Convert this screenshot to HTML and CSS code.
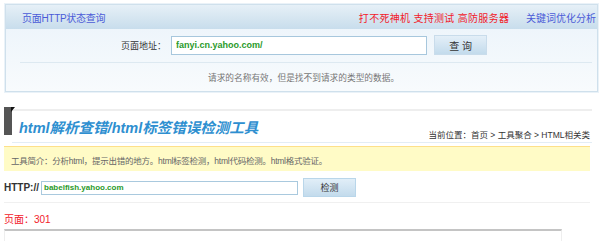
FILE: index.html
```html
<!DOCTYPE html>
<html>

<head>
  <title>html解析查错</title>
  <link rel="stylesheet" href="styles.css">
</head>

<body>

  <div class="status-box">
    <div class="status-head">
      <span class="status-title">页面HTTP状态查询</span>
      <span class="status-links">
        <span class="red-link">打不死神机 支持测试 高防服务器</span>
        <span class="blue-link">关键词优化分析</span>
      </span>
    </div>
    <div class="status-body">
      <div class="query-row">
        <span class="query-label">页面地址：</span>
        <input class="query-input" type="text" value="fanyi.cn.yahoo.com/">
        <button class="query-btn">查 询</button>
      </div>
      <div class="query-msg">请求的名称有效，但是找不到请求的类型的数据。</div>
    </div>
  </div>

  <div class="tool-head">
    <div class="tool-bar"></div>
    <div class="tool-main">
      <h1 class="tool-title">html解析查错/html标签错误检测工具</h1>
      <div class="crumb">当前位置：首页 &gt; 工具聚合 &gt; HTML相关类</div>
    </div>
  </div>

  <div class="intro">工具简介：分析html，提示出错的地方。html标签检测，html代码检测。html格式验证。</div>

  <div class="check-row">
    <span class="check-label">HTTP://</span>
    <input class="check-input" type="text" value="babelfish.yahoo.com">
    <button class="check-btn">检测</button>
  </div>

  <div class="result-code">页面：301</div>
  <div class="result-box"></div>

</body>

</html>
```

FILE: styles.css
```css
* {
  font-family: "Liberation Sans", "Noto Sans CJK SC", sans-serif;
  box-sizing: border-box;
}

body {
  margin: 0;
  background-color: #ffffff;
  width: 601px;
  height: 241px;
  overflow: hidden;
}

/* Top status box */
.status-box {
  margin: 4px 3px 0 5px;
  border: 1px solid #cfe0ec;
  box-shadow: 0 0 0 1px #eaf2f8;
  height: 88px;
}

.status-head {
  height: 24px;
  background: linear-gradient(#e6f0f7, #c8ddec);
  display: flex;
  justify-content: space-between;
  align-items: center;
  padding: 0 1px 0 16px;
  font-size: 10px;
}

.status-title {
  color: #4b5bd8;
  letter-spacing: -0.3px;
}

.red-link {
  color: #f2202a;
  margin-right: 14px;
  letter-spacing: 0.3px;
}

.blue-link {
  color: #4b5bd8;
}

.status-body {
  background: linear-gradient(#eef5fb, #f8fbfd);
  height: 62px;
  padding: 6px 0 0 14px;
}

.query-row {
  display: flex;
  align-items: center;
  padding-left: 101px;
  padding-bottom: 7px;
  border-bottom: 1px solid #dde9f1;
  width: 572px;
}

.query-label {
  font-size: 9px;
  color: #333;
  margin-right: 5px;
}

.query-input {
  width: 256px;
  height: 19px;
  border: 1px solid #a7c7dd;
  background: #fff;
  color: #2a9a2a;
  font-weight: bold;
  font-size: 9px;
  padding: 0 4px;
}

.query-btn {
  width: 53px;
  height: 20px;
  margin-left: 7px;
  border: 1px solid #c9dceb;
  background: linear-gradient(#e4eff8, #c3dbec);
  font-size: 10px;
  color: #333;
  padding: 0;
}

.query-msg {
  text-align: center;
  font-size: 8.7px;
  color: #777;
  margin-top: 8px;
  padding-right: 10px;
}

/* Tool heading */
.tool-head {
  display: flex;
  margin-top: 14px;
  height: 37px;
}

.tool-bar {
  width: 8px;
  height: 28px;
  margin-left: 4px;
  margin-top: 1px;
  background-color: #555;
  position: relative;
}

.tool-bar::after {
  content: "";
  position: absolute;
  right: -3px;
  top: 0;
  border-left: 4px solid #111;
  border-bottom: 5px solid transparent;
}

.tool-main {
  flex: 1;
  margin-right: 9px;
  border-top: 2px solid #eeeeee;
  border-bottom: 1px solid #e3edf5;
  margin-top: 3px;
  display: flex;
  justify-content: space-between;
  align-items: flex-end;
  padding: 0 2px 2px 7px;
}

.tool-title {
  margin: 0;
  font-size: 14.5px;
  font-style: italic;
  font-weight: bold;
  color: #2e8fd0;
  align-self: flex-start;
  margin-top: 5px;
}

.crumb {
  font-size: 8.5px;
  color: #333;
}

/* Intro */
.intro {
  margin: 3px 11px 0 4px;
  height: 25px;
  background-color: #fffbc6;
  border-top: 1px solid #fde08a;
  font-size: 8.5px;
  letter-spacing: -0.25px;
  color: #666;
  padding: 7px 0 0 7px;
}

/* Check row */
.check-row {
  display: flex;
  align-items: center;
  margin: 7px 11px 0 4px;
  padding-bottom: 5px;
  border-bottom: 1px solid #f0f0f0;
}

.check-label {
  font-size: 10px;
  font-weight: bold;
  color: #333;
  margin-right: 2px;
}

.check-input {
  width: 257px;
  height: 14px;
  border: 1px solid #a9c9de;
  color: #2a9a2a;
  font-weight: bold;
  font-size: 8px;
  padding: 0 2px;
}

.check-btn {
  width: 53px;
  height: 19px;
  margin-left: 5px;
  border: 1px solid #b9d6ea;
  background: linear-gradient(#e1eef8, #c3dbec);
  font-size: 9px;
  color: #333;
  padding: 0;
}

/* Result */
.result-code {
  color: #f2202a;
  font-size: 10px;
  margin: 8px 0 0 4px;
}

.result-box {
  margin: 3px 39px 0 4px;
  height: 20px;
  border-top: 2px solid #c4c4c4;
  border-left: 1px solid #eee;
  border-right: 1px solid #eee;
}
```
